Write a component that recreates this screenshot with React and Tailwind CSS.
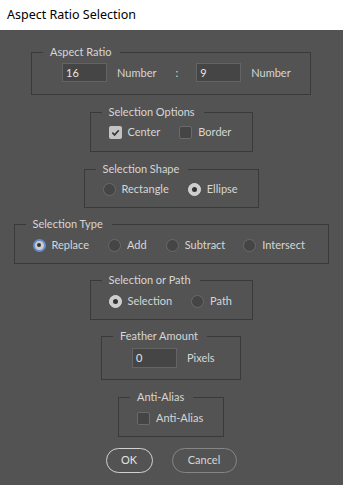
import React from "react";

const Group = ({ title, className, children }) => {
  return (
    <fieldset className={className}>
      <legend className="ml-[11px] pl-[7px] pr-[9px] leading-4">{title}</legend>
      {children}
    </fieldset>
  );
};

const Radio = ({ checked, focused }) => {
  if (focused) {
    return (
      <span className="w-[13px] h-[13px] rounded-full border-2 border-[#6a8ccb] bg-[#cdcdcd] flex items-center justify-center shrink-0">
        <span className="w-[4px] h-[4px] rounded-full bg-[#333333]" />
      </span>
    );
  }
  if (checked) {
    return (
      <span className="w-[13px] h-[13px] rounded-full border border-[#d8d8d8] bg-[#cdcdcd] flex items-center justify-center shrink-0">
        <span className="w-[5px] h-[5px] rounded-full bg-[#333333]" />
      </span>
    );
  }
  return <span className="block w-[13px] h-[13px] rounded-full border border-[#6a6a6a] bg-[#454545] shrink-0" />;
};

const Checkbox = ({ checked }) => {
  if (checked) {
    return (
      <span className="w-[13px] h-[13px] rounded-[2px] bg-[#c4c4c4] flex items-center justify-center shrink-0">
        <svg width="9" height="9" viewBox="0 0 9 9">
          <path d="M1.3 4.6 L3.6 6.9 L7.8 2.2" fill="none" stroke="#3a3a3a" strokeWidth="1.7" />
        </svg>
      </span>
    );
  }
  return <span className="block w-[13px] h-[13px] rounded-[2px] border border-[#6a6a6a] bg-[#454545] shrink-0" />;
};

const Field = ({ value }) => (
  <div className="w-[45px] bg-[#454545] border border-[#646464] pl-[3px] text-[#e6e6e6] leading-[17px] h-full">
    {value}
  </div>
);

const App = () => {
  return (
    <div className="w-[343px] h-[485px] bg-[#535353] flex flex-col text-[11px] text-[#d6d6d6] font-['Lato',sans-serif]">
      <div className="h-[30px] bg-white text-black text-[12.5px] flex items-center pl-[7px] font-['Noto_Sans',sans-serif]">
        Aspect Ratio Selection
      </div>
      <div className="flex flex-col items-center pr-[1px]">
        <Group title="Aspect Ratio" className="w-[280px] mt-[14px] border border-[#3a3a3a]">
          <div className="flex items-stretch h-[19px] pl-[30px] mt-[3px] mb-[12px]">
            <Field value="16" />
            <span className="ml-[10px] leading-[19px]">Number</span>
            <span className="ml-[19px] leading-[19px]">:</span>
            <div className="ml-[18px] flex">
              <Field value="9" />
            </div>
            <span className="ml-[10px] leading-[19px]">Number</span>
          </div>
        </Group>

        <Group title="Selection Options" className="w-[163px] mt-[9px] border border-[#3a3a3a]">
          <div className="flex items-center h-4 pl-[18px] mt-[4px] mb-[11px]">
            <Checkbox checked />
            <span className="ml-[6px]">Center</span>
            <span className="ml-[19px] flex"><Checkbox /></span>
            <span className="ml-[6px]">Border</span>
          </div>
        </Group>

        <Group title="Selection Shape" className="w-[175px] mt-[9px] border border-[#3a3a3a]">
          <div className="flex items-center h-4 pl-[18px] mt-[4px] mb-[10px]">
            <Radio />
            <span className="ml-[6px]">Rectangle</span>
            <span className="ml-[19px] flex"><Radio checked /></span>
            <span className="ml-[6px]">Ellipse</span>
          </div>
        </Group>

        <Group title="Selection Type" className="w-[315px] mt-[8px] border border-[#3a3a3a]">
          <div className="flex items-center h-4 pl-[18px] mt-[5px] mb-[10px]">
            <Radio focused />
            <span className="ml-[6px]">Replace</span>
            <span className="ml-[19px] flex"><Radio /></span>
            <span className="ml-[6px]">Add</span>
            <span className="ml-[19px] flex"><Radio /></span>
            <span className="ml-[6px]">Subtract</span>
            <span className="ml-[18px] flex"><Radio /></span>
            <span className="ml-[6px]">Intersect</span>
          </div>
        </Group>

        <Group title="Selection or Path" className="w-[163px] mt-[8px] border border-[#3a3a3a]">
          <div className="flex items-center h-4 pl-[18px] mt-[5px] mb-[10px]">
            <Radio checked />
            <span className="ml-[6px]">Selection</span>
            <span className="ml-[19px] flex"><Radio /></span>
            <span className="ml-[6px]">Path</span>
          </div>
        </Group>

        <Group title="Feather Amount" className="w-[140px] mt-[8px] border border-[#3a3a3a]">
          <div className="flex items-stretch h-[20px] pl-[30px] mt-[4px] mb-[11px]">
            <Field value="0" />
            <span className="ml-[10px] leading-[20px]">Pixels</span>
          </div>
        </Group>

        <Group title="Anti-Alias" className="w-[106px] mt-[9px] border border-[#3a3a3a]">
          <div className="flex items-center h-4 pl-[18px] mt-[5px] mb-[10px]">
            <Checkbox />
            <span className="ml-[6px]">Anti-Alias</span>
          </div>
        </Group>

        <div className="flex gap-[19px] mt-[11px]">
          <button className="w-[47px] h-[25px] rounded-full border border-[#d2d2d2] text-[#e2e2e2]">OK</button>
          <button className="w-[65px] h-[25px] rounded-full border border-[#858585] text-[#d6d6d6]">Cancel</button>
        </div>
      </div>
    </div>
  );
};

export default App;
